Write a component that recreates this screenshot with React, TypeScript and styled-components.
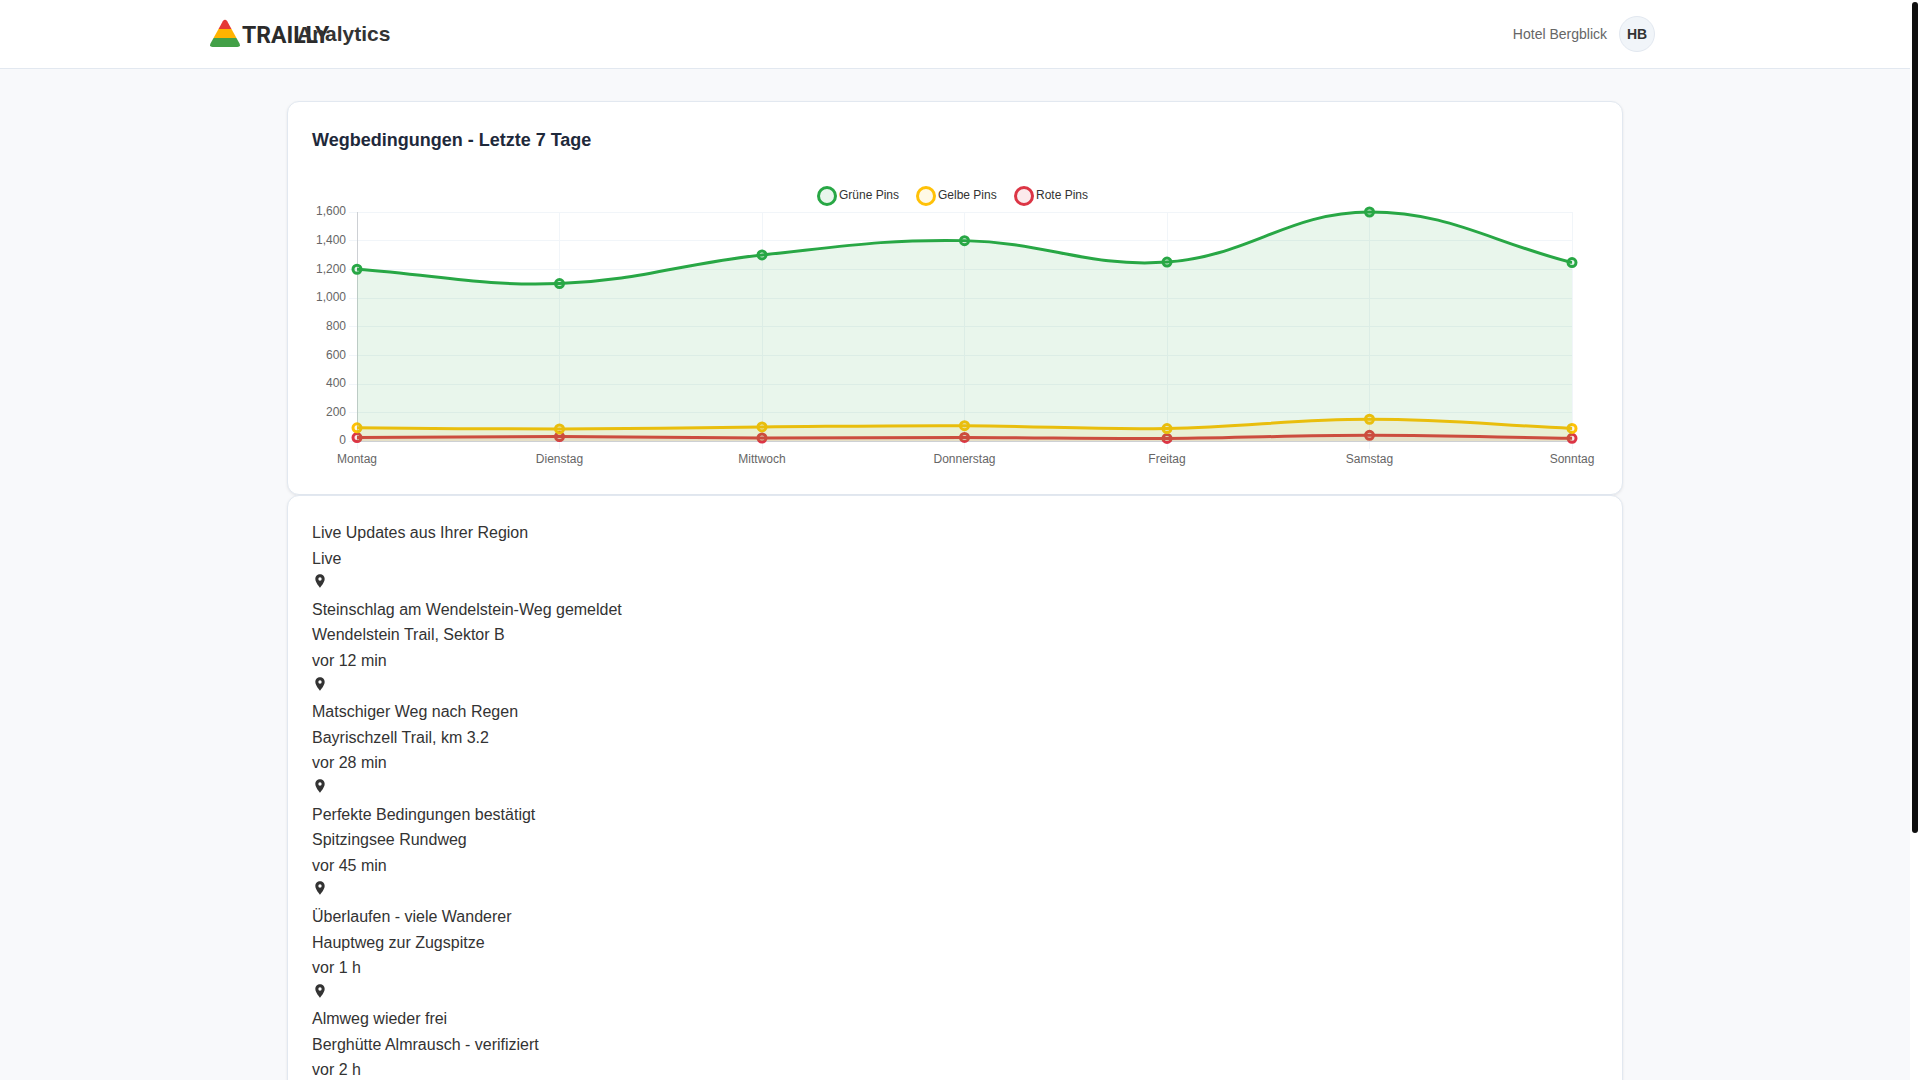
import React, { useLayoutEffect, useRef, useState } from "react";
import styled, { createGlobalStyle } from "styled-components";

const GlobalStyle = createGlobalStyle`
  * { box-sizing: border-box; margin: 0; padding: 0; }
  body {
    font-family: "Liberation Sans", Arial, sans-serif;
    font-size: 16px;
    line-height: 1.6;
    color: #333;
    background: #fff;
  }
`;

const Shell = styled.div`
  display: grid;
  grid-template-columns: minmax(0, 1fr) 10px;
  height: 100vh;
`;

const Page = styled.div`
  overflow-y: auto;
  scrollbar-width: none;
  background: #f8f9fb;
`;

const ScrollTrack = styled.div`
  padding: 2px;
  background: #fff;
`;

const ScrollThumb = styled.div`
  border-radius: 3px;
  background: #0f0f0f;
`;

const Header = styled.header`
  background: #fff;
  border-bottom: 1px solid #e2e8f0;
  padding: 16px 0;
`;

const HeaderInner = styled.div`
  max-width: 1400px;
  margin: 0 auto;
  display: flex;
  align-items: center;
  justify-content: space-between;
`;

const Brand = styled.div`
  display: flex;
  align-items: center;
  gap: 12px;
`;

const LogoBox = styled.div`
  width: 30px;
  display: flex;
  justify-content: center;
`;

const Logo = styled.svg`
  width: 120px;
  height: 36px;
  flex: none;
`;

const BrandTitle = styled.h1`
  position: relative;
  font-size: 21px;
  line-height: 36px;
  font-weight: 700;
  color: #333;
`;

const Account = styled.div`
  display: flex;
  align-items: center;
  gap: 12px;
`;

const AccountName = styled.span`
  font-size: 14px;
  color: #666;
`;

const Avatar = styled.div`
  width: 36px;
  height: 36px;
  border-radius: 50%;
  border: 1px solid #e2e8f0;
  background: #f1f5f9;
  display: flex;
  align-items: center;
  justify-content: center;
  font-size: 14px;
  font-weight: 700;
  color: #333;
`;

const Main = styled.main`
  max-width: 1400px;
  min-height: 1330px;
  margin: 0 auto;
  padding: 32px;
`;

const Card = styled.section`
  background: #fff;
  border: 1px solid #e2e8f0;
  border-radius: 12px;
  padding: 24px;
  box-shadow: 0 1px 3px rgba(0, 0, 0, 0.08);
`;

const CardTitle = styled.h2`
  font-size: 18px;
  line-height: 28px;
  margin-bottom: 16px;
  color: #1e293b;
`;

const ChartBox = styled.div`
  height: 300px;
  svg { display: block; }
`;

const PlaceIcon = styled.svg`
  width: 16px;
  height: 16px;
  fill: currentColor;
`;

const List = styled.ul`
  list-style: none;
`;

const days = ["Montag", "Dienstag", "Mittwoch", "Donnerstag", "Freitag", "Samstag", "Sonntag"];

const series = [
  { label: "Grüne Pins", color: "#28a745", offset: 515, data: [1200, 1100, 1300, 1400, 1250, 1600, 1247] },
  { label: "Gelbe Pins", color: "#ffc107", offset: 614, data: [92, 84, 98, 107, 87, 152, 88] },
  { label: "Rote Pins", color: "#dc3545", offset: 712, data: [24, 31, 21, 25, 18, 40, 19] },
];

const plot = { left: 45, right: 26, top: 42, bottom: 271, max: 1600 };

type Pt = { x: number; y: number };

function smoothPath(pts: Pt[], tension: number) {
  const clampY = (y: number) => Math.min(plot.bottom, Math.max(plot.top, y));
  const controls = pts.map((p, i) => {
    const prev = pts[Math.max(i - 1, 0)];
    const next = pts[Math.min(i + 1, pts.length - 1)];
    const d1 = Math.hypot(p.x - prev.x, p.y - prev.y);
    const d2 = Math.hypot(next.x - p.x, next.y - p.y);
    const a = (tension * d1) / (d1 + d2);
    const b = (tension * d2) / (d1 + d2);
    return {
      inX: p.x - a * (next.x - prev.x),
      inY: clampY(p.y - a * (next.y - prev.y)),
      outX: p.x + b * (next.x - prev.x),
      outY: clampY(p.y + b * (next.y - prev.y)),
    };
  });
  return pts.reduce((d, p, i) => {
    if (i === 0) return `M${p.x},${p.y}`;
    const c = controls[i - 1];
    const n = controls[i];
    return `${d} C${c.outX},${c.outY} ${n.inX},${n.inY} ${p.x},${p.y}`;
  }, "");
}

function ConditionsChart() {
  const box = useRef<HTMLDivElement>(null);
  const [width, setWidth] = useState(0);

  useLayoutEffect(() => {
    const el = box.current;
    if (!el) return;
    const measure = () => setWidth(el.clientWidth);
    measure();
    const observer = new ResizeObserver(measure);
    observer.observe(el);
    return () => observer.disconnect();
  }, []);

  const right = width - plot.right;
  const xAt = (i: number) => plot.left + ((right - plot.left) * i) / (days.length - 1);
  const yAt = (v: number) => plot.bottom - ((plot.bottom - plot.top) * v) / plot.max;
  const ticks = Array.from({ length: 9 }, (_, i) => i * 200);
  const crisp = (n: number) => Math.round(n - 0.2) + 0.5;

  return (
    <ChartBox ref={box}>
      {width > 0 && (
        <svg width={width} height={300} fontFamily="Liberation Sans, Arial, sans-serif" fontSize={12} role="img" aria-label="Wegbedingungen">
          <defs>
            <clipPath id="plot-area">
              <rect x={plot.left} y={plot.top - 2} width={right - plot.left} height={plot.bottom - plot.top + 4} />
            </clipPath>
          </defs>
          {ticks.map((v) => (
            <g key={v}>
              <line x1={plot.left - 8} x2={right} y1={crisp(yAt(v))} y2={crisp(yAt(v))} stroke="#f1f5f9" />
              <text x={plot.left - 11} y={Math.round(yAt(v) + 3.4)} textAnchor="end" fill="#666">
                {v.toLocaleString("en-US")}
              </text>
            </g>
          ))}
          {days.map((day, i) => (
            <g key={day}>
              <line x1={crisp(xAt(i))} x2={crisp(xAt(i))} y1={plot.top} y2={plot.bottom + 8} stroke="#f1f5f9" />
              <text x={xAt(i)} y={293} textAnchor="middle" fill="#666">{day}</text>
            </g>
          ))}
          <path
            d={`M${plot.left + 0.5},${plot.top} V${plot.bottom + 0.5} H${right}`}
            fill="none"
            stroke="#000"
            strokeOpacity={0.15}
          />
          {[...series].reverse().map((s) => {
            const pts = s.data.map((v, i) => ({ x: xAt(i), y: yAt(v) }));
            const d = smoothPath(pts, 0.4);
            return (
              <g key={s.label}>
                <g clipPath="url(#plot-area)">
                  <path d={`${d} V${plot.bottom} H${plot.left} Z`} fill={s.color} fillOpacity={0.1} />
                  <path d={d} fill="none" stroke={s.color} strokeWidth={3} />
                </g>
                {pts.map((p) => (
                  <circle key={p.x} cx={p.x} cy={p.y} r={4} fill={s.color} fillOpacity={0.1} stroke={s.color} strokeWidth={3} />
                ))}
              </g>
            );
          })}
          {series.map((s) => {
            const x = width / 2 - 643 + s.offset;
            return (
              <g key={s.label}>
                <circle cx={x} cy={26} r={8.5} fill={s.color} fillOpacity={0.1} stroke={s.color} strokeWidth={3} />
                <text x={x + 12} y={29} fill="#333">{s.label}</text>
              </g>
            );
          })}
        </svg>
      )}
    </ChartBox>
  );
}

const updates = [
  { title: "Steinschlag am Wendelstein-Weg gemeldet", place: "Wendelstein Trail, Sektor B", time: "vor 12 min" },
  { title: "Matschiger Weg nach Regen", place: "Bayrischzell Trail, km 3.2", time: "vor 28 min" },
  { title: "Perfekte Bedingungen bestätigt", place: "Spitzingsee Rundweg", time: "vor 45 min" },
  { title: "Überlaufen - viele Wanderer", place: "Hauptweg zur Zugspitze", time: "vor 1 h" },
  { title: "Almweg wieder frei", place: "Berghütte Almrausch - verifiziert", time: "vor 2 h" },
];

function TraillyLogo() {
  return (
    <Logo viewBox="0 0 120 36" role="img" aria-label="Trailly">
      <defs>
        <clipPath id="peak">
          <path d="M12.8 5.300 Q15 2.400 17.200 5.300 L29.500 27.400 Q31 31 27.400 31 H2.600 Q-1 31 0.500 27.400 Z" />
        </clipPath>
      </defs>
      <g clipPath="url(#peak)">
        <rect width="30" height="13" fill="#e53935" />
        <rect y="13" width="30" height="9" fill="#ffb300" />
        <rect y="22" width="30" height="10" fill="#43a047" />
      </g>
      <text x="32" y="27" fontFamily="Roboto, sans-serif" fontSize="23" fontWeight="700" fill="#2b2b2b">TRAILLY</text>
    </Logo>
  );
}

export default function App() {
  const page = useRef<HTMLDivElement>(null);
  const [thumb, setThumb] = useState({ size: 0, top: 0 });

  const syncThumb = () => {
    const el = page.current;
    if (!el) return;
    const track = el.clientHeight - 4;
    setThumb({
      size: Math.round((track * el.clientHeight) / el.scrollHeight),
      top: Math.round((track * el.scrollTop) / el.scrollHeight),
    });
  };

  useLayoutEffect(() => {
    syncThumb();
    window.addEventListener("resize", syncThumb);
    return () => window.removeEventListener("resize", syncThumb);
  }, []);

  return (
    <>
      <GlobalStyle />
      <Shell>
        <Page ref={page} onScroll={syncThumb}>
          <Header>
            <HeaderInner>
              <Brand>
                <LogoBox><TraillyLogo /></LogoBox>
                <BrandTitle>Analytics</BrandTitle>
              </Brand>
              <Account>
                <AccountName>Hotel Bergblick</AccountName>
                <Avatar>HB</Avatar>
              </Account>
            </HeaderInner>
          </Header>
          <Main>
            <Card>
              <CardTitle>Wegbedingungen - Letzte 7 Tage</CardTitle>
              <ConditionsChart />
            </Card>
            <Card>
              <p>Live Updates aus Ihrer Region</p>
              <p>Live</p>
              <List>
                {updates.map((u) => (
                  <li key={u.title}>
                    <div>
                      <PlaceIcon viewBox="0 0 24 24" aria-hidden="true">
                        <path d="M12 2C8.13 2 5 5.13 5 9c0 5.25 7 13 7 13s7-7.75 7-13c0-3.87-3.13-7-7-7zm0 9.500a2.500 2.500 0 0 1 0-5 2.500 2.500 0 0 1 0 5z" />
                      </PlaceIcon>
                    </div>
                    <p>{u.title}</p>
                    <p>{u.place}</p>
                    <p>{u.time}</p>
                  </li>
                ))}
              </List>
            </Card>
          </Main>
        </Page>
        <ScrollTrack aria-hidden="true">
          <ScrollThumb style={{ height: thumb.size, marginTop: thumb.top }} />
        </ScrollTrack>
      </Shell>
    </>
  );
}
